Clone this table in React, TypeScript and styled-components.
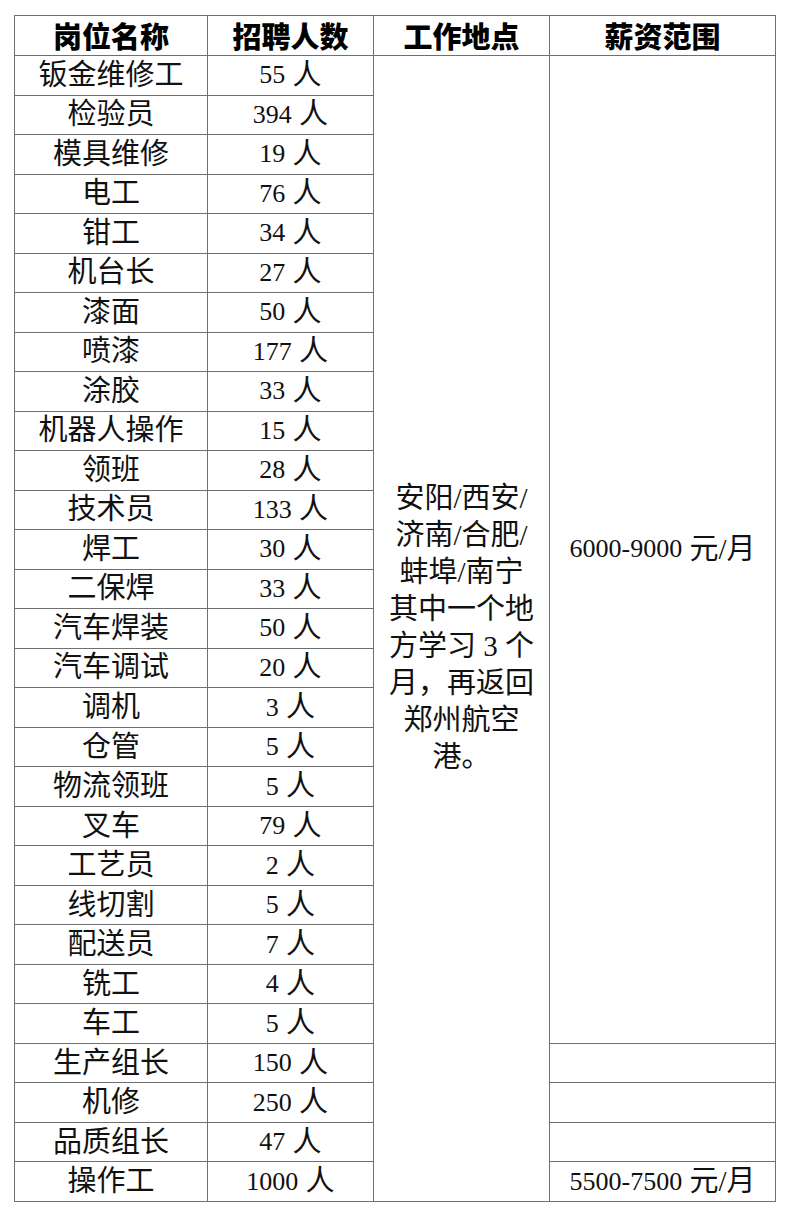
import styled, { createGlobalStyle } from "styled-components";

const jobs: [string, number][] = [
  ["钣金维修工", 55],
  ["检验员", 394],
  ["模具维修", 19],
  ["电工", 76],
  ["钳工", 34],
  ["机台长", 27],
  ["漆面", 50],
  ["喷漆", 177],
  ["涂胶", 33],
  ["机器人操作", 15],
  ["领班", 28],
  ["技术员", 133],
  ["焊工", 30],
  ["二保焊", 33],
  ["汽车焊装", 50],
  ["汽车调试", 20],
  ["调机", 3],
  ["仓管", 5],
  ["物流领班", 5],
  ["叉车", 79],
  ["工艺员", 2],
  ["线切割", 5],
  ["配送员", 7],
  ["铣工", 4],
  ["车工", 5],
  ["生产组长", 150],
  ["机修", 250],
  ["品质组长", 47],
  ["操作工", 1000],
];

const headers = ["岗位名称", "招聘人数", "工作地点", "薪资范围"];

const placeLines = [
  "安阳/西安/",
  "济南/合肥/",
  "蚌埠/南宁",
  "其中一个地",
  "方学习 3 个",
  "月，再返回",
  "郑州航空",
  "港。",
];

const App = () => {
  const last = jobs.length + 1;

  return (
    <Page>
      <GlobalStyle />
      <Table>
        {headers.map((h) => (
          <HeadCell key={h}>{h}</HeadCell>
        ))}

        <Cell $col={3} $row={2} $span={jobs.length}>
          <Place>
            {placeLines.map((line) => (
              <PlaceLine key={line}>{line}</PlaceLine>
            ))}
          </Place>
        </Cell>

        <Cell $col={4} $row={2} $span={25}>
          <Num>6000-9000</Num>&nbsp;元/月
        </Cell>
        {[27, 28, 29].map((r) => (
          <Cell key={r} $col={4} $row={r} />
        ))}
        <Cell $col={4} $row={last}>
          <Num>5500-7500</Num>&nbsp;元/月
        </Cell>

        {jobs.map(([name, count]) => (
          <Row key={name}>
            <Cell>{name}</Cell>
            <Cell>
              <Num>{count}</Num>&nbsp;人
            </Cell>
          </Row>
        ))}
      </Table>
    </Page>
  );
};

export default App;

const GlobalStyle = createGlobalStyle`
  body {
    margin: 0;
    background: #fff;
    color: #111;
    font-family: "Liberation Serif", "Noto Sans CJK SC", serif;
  }
`;

const Page = styled.div`
  padding: 15px 0 0 14px;
`;

const Table = styled.div`
  display: grid;
  grid-template-columns: 193px 166px 176px 226px;
  grid-template-rows: 40px repeat(29, 39.52px);
  width: max-content;
  border-top: 1px solid #6f6f6f;
  border-left: 1px solid #6f6f6f;
`;

const Row = styled.div`
  display: contents;
`;

const Cell = styled.div<{ $col?: number; $row?: number; $span?: number }>`
  box-sizing: border-box;
  display: flex;
  align-items: center;
  justify-content: center;
  border-right: 1px solid #6f6f6f;
  border-bottom: 1px solid #6f6f6f;
  font-size: 29px;
  line-height: 1;
  white-space: nowrap;
  ${({ $col }) => ($col ? `grid-column: ${$col};` : "")}
  ${({ $row, $span }) =>
    $row ? `grid-row: ${$row} / span ${$span ?? 1};` : ""}
`;

const HeadCell = styled(Cell)`
  font-family: "Noto Sans CJK SC", sans-serif;
  font-weight: 900;
  color: #000;
`;

const Num = styled.span`
  font-size: 26px;
`;

const Place = styled.div`
  text-align: center;
  line-height: 37px;
`;

const PlaceLine = styled.div`
  display: block;
`;
